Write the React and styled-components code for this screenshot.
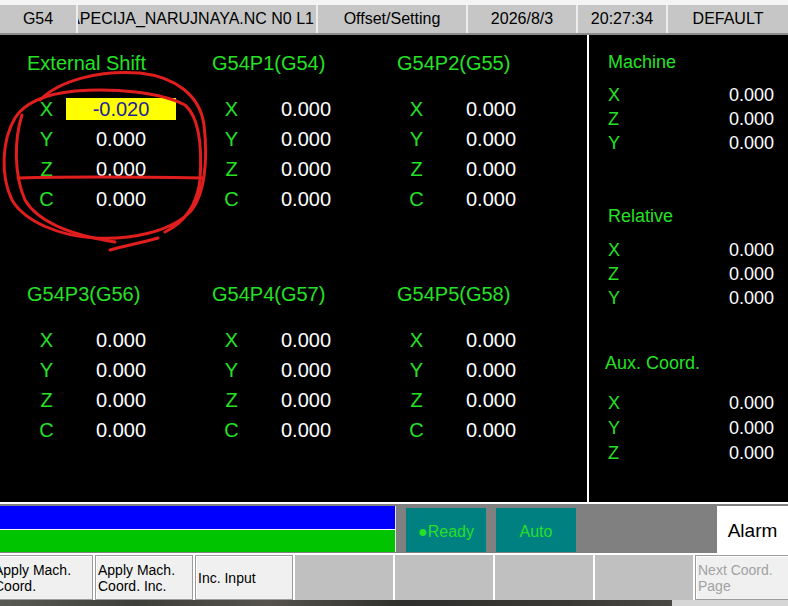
import React from 'react';
import styled, { createGlobalStyle } from 'styled-components';

const GREEN = '#26e026';

const Global = createGlobalStyle`
  html, body { margin: 0; padding: 0; background: #f0f0f0; }
  body { font-family: "Liberation Sans", Arial, sans-serif; }
  * { box-sizing: border-box; }
`;

const Screen = styled.div`
  position: relative;
  width: 788px;
  height: 606px;
  overflow: hidden;
  display: flex;
  flex-direction: column;
  background: #f0f0f0;
`;

const TopGap = styled.div`
  flex: none;
  height: 5px;
  background: #f4f4f4;
`;

const TopBar = styled.div`
  flex: none;
  height: 30px;
  display: flex;
  background: #c6c6c6;
  border-bottom: 2px solid #8c8c8c;
`;

const TopCell = styled.div`
  flex: none;
  width: ${p => p.$w}px;
  display: flex;
  align-items: center;
  justify-content: ${p => (p.$end ? 'flex-end' : 'center')};
  padding-right: ${p => (p.$end ? '2px' : '0')};
  overflow: hidden;
  white-space: nowrap;
  border-left: ${p => (p.$first ? 'none' : '2px solid #ececec')};
  font-size: 16px;
  color: #000;
`;

const Main = styled.div`
  flex: none;
  height: 467px;
  display: flex;
  background: #000;
`;

const LeftPanel = styled.div`
  width: 587px;
  padding: 16px 0 0 27px;
  display: flex;
  flex-direction: column;
`;

const Group = styled.div`
  display: flex;
  margin-top: ${p => p.$top || 0}px;
`;

const Column = styled.div`
  width: 185px;
  flex: none;
`;

const ColTitle = styled.div`
  font-size: 20px;
  line-height: 24px;
  color: ${GREEN};
  white-space: nowrap;
`;

const Rows = styled.div`
  margin-top: 19px;
  display: grid;
  grid-template-columns: 39px 110px;
  grid-auto-rows: 30px;
  align-items: center;
`;

const Label = styled.div`
  text-align: center;
  font-size: 20px;
  color: ${GREEN};
`;

const Value = styled.div`
  height: 22px;
  line-height: 22px;
  text-align: center;
  font-size: 20px;
  color: ${p => (p.$hl ? '#1f1f9a' : '#fff')};
  background: ${p => (p.$hl ? '#ffff00' : 'transparent')};
`;

const Divider = styled.div`
  width: 2px;
  flex: none;
  background: #fff;
`;

const RightPanel = styled.div`
  flex: 1;
  padding: 15px 14px 0 19px;
  display: flex;
  flex-direction: column;
`;

const RSection = styled.div`
  margin-top: ${p => p.$top || 0}px;
`;

const RTitle = styled.div`
  font-size: 18px;
  line-height: 24px;
  color: ${GREEN};
  margin-left: ${p => p.$shift || 0}px;
`;

const RRows = styled.div`
  margin-top: ${p => p.$gap}px;
  display: grid;
  grid-auto-rows: ${p => p.$row}px;
  align-items: center;
`;

const RRow = styled.div`
  display: flex;
  justify-content: space-between;
  font-size: 18px;
`;

const RLabel = styled.span`
  color: ${GREEN};
`;

const RValue = styled.span`
  color: #fff;
`;

const HLine = styled.div`
  flex: none;
  height: 2px;
  background: #fff;
`;

const Status = styled.div`
  flex: none;
  height: 49px;
  display: flex;
  background: #808080;
`;

const Bars = styled.div`
  width: 396px;
  flex: none;
  padding: 2px 0 1px 0;
  display: flex;
  flex-direction: column;
`;

const Bar = styled.div`
  flex: none;
  height: ${p => p.$h}px;
  background: ${p => p.$c};
  border-right: 1px solid #e6e6e6;
  border-bottom: ${p => (p.$sep ? '1px solid #fff' : 'none')};
`;

const Lamp = styled.div`
  width: 80px;
  flex: none;
  margin: 4px 0 1px 10px;
  padding-top: 3px;
  background: #008080;
  color: ${GREEN};
  font-size: 16px;
  display: flex;
  align-items: center;
  justify-content: center;
`;

const Alarm = styled.div`
  margin: 2px 0 0 auto;
  padding-top: 2px;
  width: 71px;
  background: #fff;
  color: #000;
  font-size: 19px;
  display: flex;
  align-items: center;
  justify-content: center;
`;

const SoftKeys = styled.div`
  flex: none;
  height: 47px;
  padding-top: 2px;
  background: #fff;
  display: flex;
  gap: 2px;
  margin-left: -9px;
`;

const SoftKey = styled.div`
  flex: none;
  width: ${p => p.$w || 98}px;
  height: 45px;
  padding: 0 2px;
  display: flex;
  align-items: center;
  font-size: 14px;
  line-height: 16px;
  white-space: nowrap;
  color: ${p => (p.$disabled ? '#a2a2a2' : '#000')};
  background: ${p => (p.$light ? '#f0f0f0' : '#c0c0c0')};
  border: 1px solid ${p => (p.$light ? '#9c9c9c' : '#c0c0c0')};
  box-shadow: ${p => (p.$light ? 'inset 1px 1px 0 #fff' : 'none')};
`;

const BottomStrip = styled.div`
  flex: none;
  height: 6px;
  display: flex;
`;

const StripDark = styled.div`
  flex: 1;
  background: linear-gradient(90deg, #5a5a55 0%, #3e3e3a 20%, #55534c 40%, #2e2e2c 60%, #3a3936 85%, #4a4844 100%);
`;

const StripLight = styled.div`
  width: 116px;
  flex: none;
  background: #d6d6d6;
`;

const Overlay = styled.svg`
  position: absolute;
  left: 0;
  top: 0;
  pointer-events: none;
`;

const offsetGroups = [
  [
    { title: 'External Shift', values: ['-0.020', '0.000', '0.000', '0.000'], hl: 0 },
    { title: 'G54P1(G54)', values: ['0.000', '0.000', '0.000', '0.000'] },
    { title: 'G54P2(G55)', values: ['0.000', '0.000', '0.000', '0.000'] },
  ],
  [
    { title: 'G54P3(G56)', values: ['0.000', '0.000', '0.000', '0.000'] },
    { title: 'G54P4(G57)', values: ['0.000', '0.000', '0.000', '0.000'] },
    { title: 'G54P5(G58)', values: ['0.000', '0.000', '0.000', '0.000'] },
  ],
];

const axes = ['X', 'Y', 'Z', 'C'];

const coordSections = [
  { title: 'Machine', top: 0, gap: 9, row: 24, axes: ['X', 'Z', 'Y'] },
  { title: 'Relative', top: 49, gap: 10, row: 24, axes: ['X', 'Z', 'Y'] },
  { title: 'Aux. Coord.', top: 41, gap: 16, row: 25, axes: ['X', 'Y', 'Z'], shift: -3 },
];

const keys = [
  { lines: ['Apply Mach.', 'Coord.'], light: true, w: 102 },
  { lines: ['Apply Mach.', 'Coord. Inc.'], light: true },
  { lines: ['Inc. Input'], light: true },
  { lines: [] },
  { lines: [] },
  { lines: [] },
  { lines: [] },
  { lines: ['Next Coord.', 'Page'], light: true, disabled: true },
];

export default function App() {
  return (
    <>
      <Global />
      <Screen>
        <TopGap />
        <TopBar>
          <TopCell $w={76} $first>G54</TopCell>
          <TopCell $w={240} $end>TRAPECIJA_NARUJNAYA.NC N0 L1</TopCell>
          <TopCell $w={150}>Offset/Setting</TopCell>
          <TopCell $w={110}>2026/8/3</TopCell>
          <TopCell $w={90}>20:27:34</TopCell>
          <TopCell $w={122}>DEFAULT</TopCell>
        </TopBar>

        <Main>
          <LeftPanel>
            {offsetGroups.map((group, gi) => (
              <Group key={gi} $top={gi === 0 ? 0 : 68}>
                {group.map(col => (
                  <Column key={col.title}>
                    <ColTitle>{col.title}</ColTitle>
                    <Rows>
                      {axes.map((a, i) => (
                        <React.Fragment key={a}>
                          <Label>{a}</Label>
                          <Value $hl={col.hl === i}>{col.values[i]}</Value>
                        </React.Fragment>
                      ))}
                    </Rows>
                  </Column>
                ))}
              </Group>
            ))}
          </LeftPanel>
          <Divider />
          <RightPanel>
            {coordSections.map(s => (
              <RSection key={s.title} $top={s.top}>
                <RTitle $shift={s.shift}>{s.title}</RTitle>
                <RRows $gap={s.gap} $row={s.row}>
                  {s.axes.map(a => (
                    <RRow key={a}>
                      <RLabel>{a}</RLabel>
                      <RValue>0.000</RValue>
                    </RRow>
                  ))}
                </RRows>
              </RSection>
            ))}
          </RightPanel>
        </Main>

        <HLine />

        <Status>
          <Bars>
            <Bar $h={24} $c="#0000ff" $sep />
            <Bar $h={22} $c="#00c400" />
          </Bars>
          <Lamp>●Ready</Lamp>
          <Lamp>Auto</Lamp>
          <Alarm>Alarm</Alarm>
        </Status>

        <SoftKeys>
          {keys.map((k, i) => (
            <SoftKey key={i} $light={k.light} $disabled={k.disabled} $w={k.w}>
              <div>
                {k.lines.map((l, j) => (
                  <div key={j}>{l}</div>
                ))}
              </div>
            </SoftKey>
          ))}
        </SoftKeys>

        <BottomStrip>
          <StripDark />
          <StripLight />
        </BottomStrip>

        <Overlay width="788" height="606" viewBox="0 0 788 606">
          <g fill="none" stroke="#e01e1e" strokeWidth="3" strokeLinecap="round" strokeLinejoin="round">
            <path d="M 40 100 C 60 80, 100 70, 140 73 C 175 77, 200 95, 204 125 C 208 160, 205 195, 190 212 C 170 232, 130 240, 95 238 C 60 236, 25 222, 12 200 C 0 175, 2 140, 15 118 C 25 102, 45 94, 75 91 C 115 88, 160 92, 185 105 C 200 118, 202 150, 200 180 C 197 205, 185 222, 165 232" />
            <path d="M 22 115 C 14 140, 14 175, 25 200 C 38 222, 70 235, 115 242" />
            <path d="M 110 250 C 125 246, 140 243, 158 238" />
            <path d="M 18 178 C 80 176, 150 177, 203 178" />
          </g>
        </Overlay>
      </Screen>
    </>
  );
}
